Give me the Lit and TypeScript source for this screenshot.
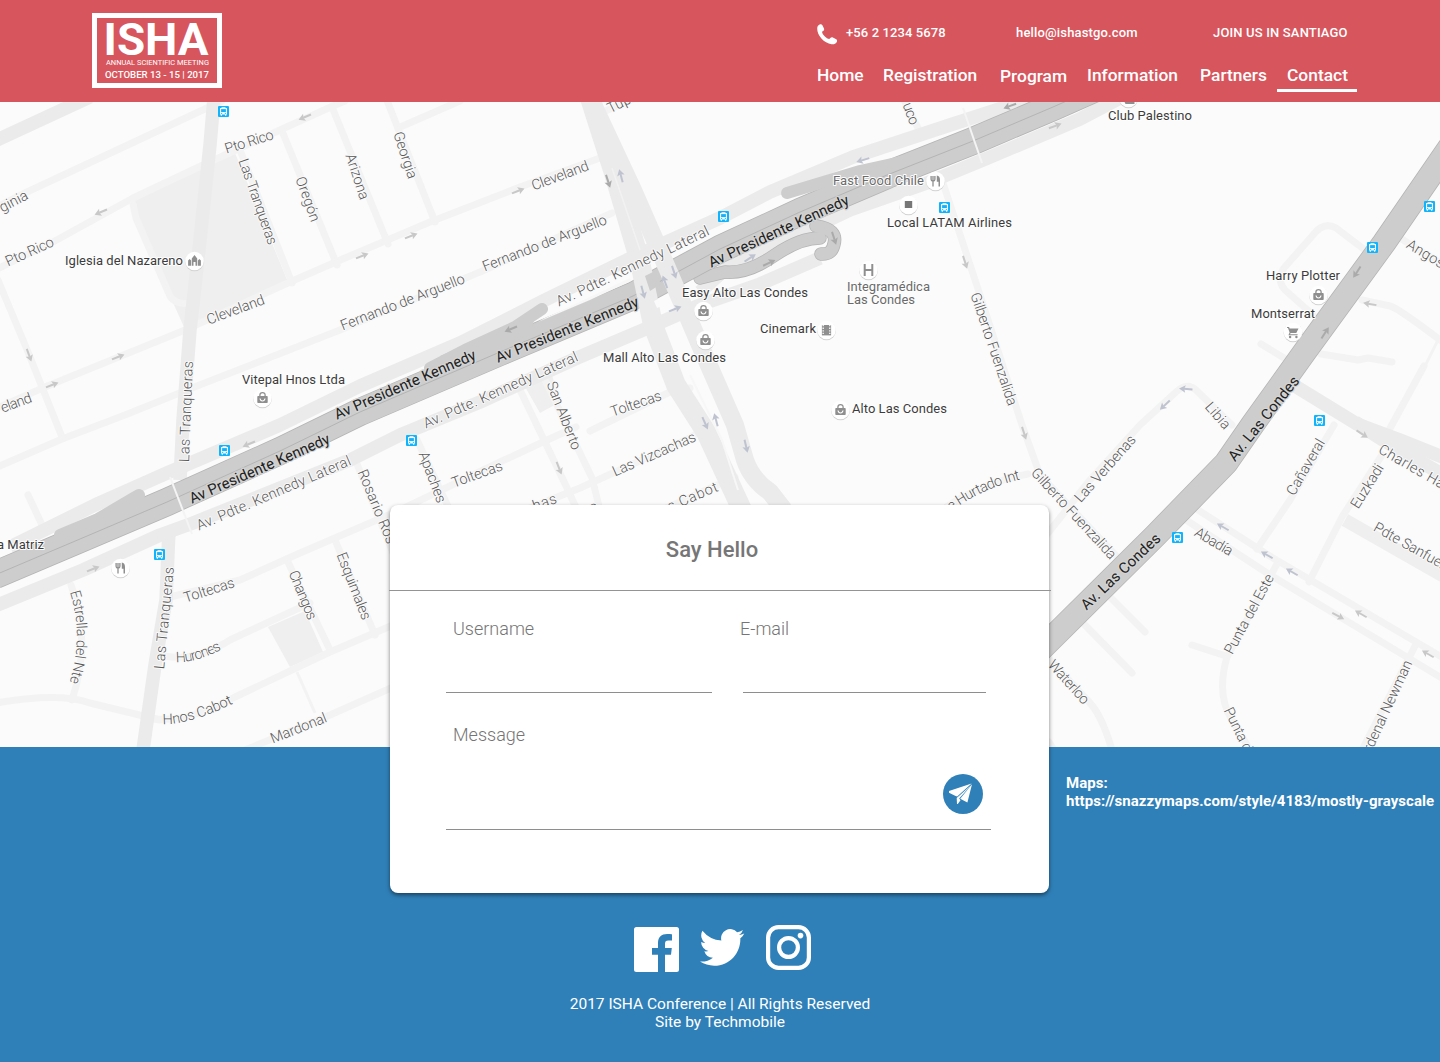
import { LitElement, html, svg, css } from "lit";
import { customElement } from "lit/decorators.js";

type Label = [text: string, x1: number, y1: number, x2: number, y2: number];
type Curved = [text: string, path: string, length: number];
type Mark = [x: number, y: number];
type Arrow = [x: number, y: number, angle: number, tint?: string];

const MINOR_ROADS: string[] = [
  "M-5 208L27 192L207 108L222 101",
  "M-5 270L53 242L133 198L203 165L280 130L333 106L345 101",
  "M-2 280L28 352L62 437",
  "M-5 409L45 387L185 330L290 282L345 258L430 222L520 187L600 158",
  "M-5 468L62 439L125 415L197 386L340 330L480 272L612 213",
  "M240 150L292 283", "M282 131L337 265", "M332 107L388 244", "M386 98L435 222", "M398 128L460 101",
  "M133 204L136 218L170 296Q174 304 190 304",
  "M28 495L43 527", "M71 585Q92 640 72 700", "M-4 703Q60 692 90 703L160 720",
  "M170 597L240 580L300 553L400 510L500 462L545 441L576 427",
  "M165 656Q195 662 230 640L310 603", "M155 719Q190 722 235 697L330 652L400 622",
  "M245 750L330 715L400 684", "M287 560L330 650", "M335 540L375 635", "M357 464L402 575",
  "M417 440L452 515", "M520 390L568 490L577 510", "M545 380L592 478L600 510",
  "M490 524L580 488L690 438L705 428", "M590 431L672 391L690 388", "M640 520L735 477",
  "M603 112L640 96", "M903 98L920 132", "M943 183L980 295L1022 425L1040 475L1122 562",
  "M930 520Q970 485 1028 474", "M1048 533L1090 480L1140 425L1176 392Q1187 382 1196 390L1232 425",
  "M1312 314L1285 290Q1276 280 1284 268L1313 235Q1324 221 1336 228L1365 250",
  "M1400 238L1445 266", "M1362 300L1390 306Q1398 308 1440 340L1448 345",
  "M1424 366L1388 432", "M1261 344L1284 358", "M1321 354L1358 360L1368 358L1392 362",
  "M1334 425L1290 500L1257 549", "M1382 455L1342 517L1309 582",
  "M1180 516L1267 573L1445 680", "M1195 508L1273 558L1445 659",
  "M1278 562L1227 657Q1216 695 1232 720L1250 750", "M1192 645L1226 656",
  "M1110 597L1145 632", "M1083 623L1132 673", "M1048 658L1090 703Q1102 716 1112 750",
  "M1415 646L1362 750", "M1049 742L1054 750",
];

const THIN_ROADS: string[] = ["M297 672L315 713", "M1438 340L1424 368", "M520 388L544 440"];

const MEDIUM_ROADS: string[] = [
  "M-5 141L90 97",
  "M214 98L210 145L200 240L190 330L183 420L180 480",
  "M169 530L166 600L155 665L143 750",
  "M10 547L95 505L167 473L280 425L360 386L460 343L545 300L627 260L720 218L770 192L853 157L953 124L1030 99",
  "M-5 606L83 570L160 535L193 523L350 460L400 435L480 402L577 358L643 330L700 305L760 284L820 258",
  "M740 262L850 210L927 183L983 160L1080 119L1120 98",
  "M1295 386L1357 424L1400 440L1445 458",
  "M1355 422L1383 440L1445 476",
  "M700 292L730 265L790 225L850 205",
];

const ARTERIAL_A = "M590 98L613 170L640 262L653 325L676 385L706 432L743 512";
const ARTERIAL_B = "M590 98L633 190L668 270L700 345L735 425L745 460Q752 480 770 492L784 510";

const KENNEDY = "M-5 575L80 539L167 502L280 451L360 412L500 352L633 296L720 249L800 212L887 175L973 141L1053 107L1130 73";
const CONDES = "M1450 147L1384 243L1306 350L1253 424L1226 463L1155 536L1040 650";
const RAMPS: string[] = [
  "M139 495L132 499L98 519L60 535",
  "M542 309L515 327L465 350L430 368",
  "M787 193L860 171L910 160",
];
const LOOP: string[] = [
  "M816 226Q838 229 834 244Q832 255 821 254",
  "M820 238Q800 238 775 255Q748 274 725 272L700 278",
];

const STREETS: Label[] = [
  ["Pto Rico", 225, 149, 273, 134], ["Las Tranqueras", 243, 159, 273, 244], ["Oregón", 300, 177, 316, 221],
  ["Arizona", 350, 154, 365, 199], ["Georgia", 398, 132, 413, 178], ["Cleveland", 532, 186, 588, 165],
  ["Fernando de Arguello", 483, 267, 606, 219], ["Fernando de Arguello", 341, 326, 464, 278],
  ["Cleveland", 207, 320, 264, 299], ["Pto Rico", 6, 262, 53, 241], ["ginia", 0, 208, 27, 194],
  ["eland", 1, 408, 31, 397], ["Las Tranqueras", 184, 462, 188, 361], ["Las Tranqueras", 159, 669, 169, 567],
  ["Av. Pdte. Kennedy Lateral", 557, 302, 708, 230], ["Av. Pdte. Kennedy Lateral", 424, 424, 577, 356],
  ["Av. Pdte. Kennedy Lateral", 197, 526, 350, 460], ["San Alberto", 551, 382, 577, 449],
  ["Toltecas", 611, 412, 661, 395], ["Las Vizcachas", 613, 472, 695, 436], ["Toltecas", 452, 483, 502, 465],
  ["Apaches", 423, 452, 442, 502], ["Rosario Ros", 362, 470, 392, 543], ["has", 533, 506, 556, 498],
  ["s Cabot", 668, 507, 717, 486], ["s", 590, 508, 598, 505], ["Toltecas", 184, 598, 234, 582],
  ["Changos", 293, 571, 313, 619], ["Esquimales", 341, 553, 367, 619], ["Mardonal", 271, 739, 326, 717],
  ["Tup", 608, 109, 630, 98], ["uco", 907, 103, 915, 124], ["Gilberto Fuenzalida", 975, 293, 1013, 405],
  ["Gilberto Fuenzalida", 1034, 470, 1114, 557], ["Las Verbenas", 1077, 500, 1133, 437],
  ["Libia", 1208, 404, 1228, 427], ["Cañaveral", 1290, 494, 1321, 440], ["Euzkadi", 1354, 507, 1380, 465],
  ["Charles Ha", 1380, 448, 1444, 485], ["Pdte Sanfuen", 1375, 526, 1448, 567], ["Abadía", 1196, 531, 1232, 552],
  ["Punta del Este", 1228, 653, 1270, 575], ["Punta de", 1228, 708, 1252, 757],
  ["ardenal Newman", 1364, 757, 1408, 661], ["Waterloo", 1051, 662, 1087, 702], ["Angost", 1408, 243, 1448, 267],
];

const CURVED: Curved[] = [
  ["Estrella del Nte", "M70 592Q85 640 67 690", 92],
  ["Hurones", "M176 662Q198 663 226 647", 48],
  ["Hnos Cabot", "M163 724Q190 725 236 702", 74],
  ["re Hurtado Int", "M948 514Q980 488 1026 478", 81],
];

const AVENUES: Label[] = [
  ["Av Presidente Kennedy", 190, 499, 329, 438], ["Av Presidente Kennedy", 335, 415, 475, 354],
  ["Av Presidente Kennedy", 496, 358, 638, 301], ["Av Presidente Kennedy", 709, 263, 848, 199],
  ["Av. Las Condes", 1083, 607, 1158, 536], ["Av. Las Condes", 1231, 459, 1296, 378],
];

const PLACES: [text: string, x: number, y: number, width: number, soft?: boolean][] = [
  ["Iglesia del Nazareno", 65, 261, 118], ["Easy Alto Las Condes", 682, 293, 126],
  ["Mall Alto Las Condes", 603, 358, 123], ["Vitepal Hnos Ltda", 242, 380, 103],
  ["Cinemark", 760, 329, 56], ["Alto Las Condes", 852, 409, 95], ["Fast Food Chile", 833, 181, 91, true],
  ["Local LATAM Airlines", 887, 223, 125], ["Integramédica", 847, 287, 83, true],
  ["Las Condes", 847, 300, 68, true], ["Club Palestino", 1108, 116, 84], ["Harry Plotter", 1266, 276, 74],
  ["Montserrat", 1251, 314, 64], ["a Matriz", -3, 545, 47],
];

const BUSES: Mark[] = [
  [223.5, 111.5], [224.5, 450.5], [159.5, 554.5], [411.5, 440.5], [723.5, 216.5],
  [944.5, 207.5], [1429.5, 206.5], [1372.5, 247.5], [1319.5, 420.5], [1177.5, 537.5],
];
const BAGS: Mark[] = [[262.5, 398], [703.5, 311], [705.5, 340], [840.5, 410], [1318.5, 295]];
const FORKS: Mark[] = [[935.5, 181], [120.5, 568]];

const GRAY = "#c8c8c8";
const BLUISH = "#bfc3d0";
const DARK = "#aaa";
const ARROWS: Arrow[] = [
  [305, 117, 157], [101, 212, 157], [29, 355, 70], [118, 357, -22], [52, 385, -22], [362, 256, -22],
  [411, 236, -22], [518, 191, -22], [608, 181, 72, DARK], [621, 176, -105, BLUISH], [643, 292, 75, BLUISH],
  [665, 282, -110, BLUISH], [674, 272, 72, BLUISH], [675, 309, -22, BLUISH], [511, 329, 157, DARK],
  [863, 160, 163, BLUISH], [1010, 106, 160, DARK], [1055, 126, -20], [834, 238, 72, DARK], [769, 263, -25, DARK],
  [750, 258, -33, BLUISH], [965, 262, 72], [1024, 433, 72], [249, 444, 157], [93, 569, -22], [559, 468, 68],
  [705, 423, 66, BLUISH], [716, 420, -105, BLUISH], [746, 446, 77, BLUISH], [1186, 389, -175, BLUISH],
  [1165, 405, 137, BLUISH], [1357, 272, 123, DARK], [1325, 333, -57, DARK], [1370, 304, -170],
  [1362, 434, 33], [1223, 527, -150, BLUISH], [1267, 555, -150, BLUISH], [1292, 572, -150, BLUISH],
  [1361, 614, -150], [1338, 616, 28], [1428, 654, -150],
];

const labelAlong = ([text, x1, y1, x2, y2]: Label, kind: string) => {
  const angle = (Math.atan2(y2 - y1, x2 - x1) * 180) / Math.PI;
  const length = Math.hypot(x2 - x1, y2 - y1);
  return svg`<text class=${kind} dy="0.34em" textLength=${length.toFixed(1)}
    transform="translate(${x1} ${y1}) rotate(${angle.toFixed(2)})">${text}</text>`;
};

@customElement("city-map")
export class CityMap extends LitElement {
  static styles = css`
    :host { display: block; height: 645px; overflow: hidden; background: #fbfbfb; }
    svg { display: block; width: 1440px; height: 645px; }
    path { fill: none; }
    text { font-family: Roboto, "Liberation Sans", sans-serif; paint-order: stroke; stroke-linejoin: round; }
    .minor { stroke: #f3f3f3; stroke-width: 7; stroke-linejoin: round; stroke-linecap: round; }
    .thin { stroke: #f3f3f3; stroke-width: 3; }
    .medium { stroke: #ebebeb; stroke-width: 13.5; stroke-linejoin: round; }
    .park { fill: #efefef; }
    .edge { stroke: #b4b4b4; }
    .fill { stroke: #cdcdcd; }
    .round { stroke-linecap: round; }
    .seam { stroke: #b4b4b4; stroke-width: 1; }
    .bridge { stroke: #f4f4f4; stroke-width: 2; }
    .street { font-size: 14.5px; font-weight: 300; fill: #585858; stroke: #fafafa; stroke-width: 2px; }
    .avenue { font-size: 15px; font-weight: 400; fill: #222; stroke: #d4d4d4; stroke-width: 2.5px; }
    .place { font-size: 13px; font-weight: 400; fill: #3c3c3c; stroke: #fdfdfd; stroke-width: 2px; }
    .soft { fill: #6a6a6a; }
    .shade { fill: #d2d2d2; }
    .disc { fill: #fff; }
    .glyph { fill: #8f8f8f; }
    .line { fill: none; stroke: #8f8f8f; stroke-width: 1.3; }
    .bus { fill: #10b4fc; }
    .white { fill: #fff; }
    .bridge-gap { fill: #fbfbfb; }
    .deck { fill: #cdcdcd; }
    .median { fill: #f7f7f7; }
    .solid { fill: #8f8f8f; }
  `;

  private disc([x, y]: Mark, glyph: unknown) {
    return svg`<g transform="translate(${x} ${y})">
      <circle class="shade" cy="0.8" r="9.4"></circle><circle class="disc" r="9.3"></circle>${glyph}</g>`;
  }

  render() {
    const bag = svg`<rect class="glyph" x="-5.2" y="-2" width="10.4" height="7" rx="0.8"></rect>
      <path class="line" d="M-2.6 -1.5V-3Q-2.6 -5.3 0 -5.3T2.6 -3V-1.5"></path>
      <path d="M-2.5 0.5Q-2 3 0 3T2.5 0.5" stroke="#fff" stroke-width="1.2"></path>`;
    const fork = svg`<path class="line" d="M-4.4 -5V-2Q-4.4 0 -2.5 0T-0.6 -2V-5M-2.5 -5V5.5"></path>
      <path class="solid" d="M1.3 -5.4Q4.5 -5 4.5 -1V5.5H3V0.8H1.3Z"></path>`;
    return html`<svg viewBox="0 102 1440 645" role="img" aria-label="Las Condes, Santiago">
      <polygon class="park" points="133,201 235,153 288,282 184,327 170,296 133,216"></polygon>
      <polygon class="park" points="268,627 305,611 323,652 290,667"></polygon>
      <polygon class="park" points="524,385 552,375 560,402 540,413"></polygon>
      ${MINOR_ROADS.map((d) => svg`<path class="minor" d=${d}></path>`)}
      ${THIN_ROADS.map((d) => svg`<path class="thin" d=${d}></path>`)}
      <path d="M1345 520L1445 577" stroke="#efefef" stroke-width="13"></path>
      ${MEDIUM_ROADS.map((d) => svg`<path class="medium" d=${d}></path>`)}
      <g stroke-linejoin="round">
        ${LOOP.map((d) => svg`<path class="edge round" stroke-width="13.5" d=${d}></path>`)}
        ${LOOP.map((d) => svg`<path class="fill round" stroke-width="12" d=${d}></path>`)}
        <path class="edge" stroke-width="28" d=${KENNEDY}></path>
        ${RAMPS.map((d) => svg`<path class="fill round" stroke-width="12" d=${d}></path>`)}
        <path class="fill" stroke-width="26.4" d=${KENNEDY}></path>
        <path class="deck" d="M60 530L98 513L130 500L120 515L60 540Z"></path>
        <path class="deck" d="M440 356L500 330L536 313L530 335L440 372Z"></path>
        <path class="seam" d=${KENNEDY}></path>
        <path class="edge" stroke-width="24.5" d=${CONDES}></path>
        <path class="fill" stroke-width="23" d=${CONDES}></path>
      </g>
      <path class="median" d="M545 318L575 304L630 278L631 281L590 300L538 322Z"></path>
      <path d=${ARTERIAL_A} stroke="#ebebeb" stroke-width="20" stroke-linejoin="round"></path>
      <path d=${ARTERIAL_B} stroke="#ebebeb" stroke-width="18" stroke-linejoin="round"></path>
      <path d="M690 375L722 440L738 490" stroke="#f7f7f7" stroke-width="2"></path>
      <path d="M612 168L640 250" stroke="#f2f2f2" stroke-width="1.5"></path>
      <path class="deck" d="M645 276L655 271L661 284L650 291Z"></path>
      <path class="bridge-gap" d="M654 301L664 296L668 304L657 308Z"></path>
      <path class="bridge" d="M170 477L192 534"></path>
      <path class="bridge" d="M963 108L982 163"></path>
      ${ARROWS.map(
        ([x, y, angle, tint]) => svg`<g transform="translate(${x} ${y}) rotate(${angle})">
          <path d="M-6.5 0H2" stroke=${tint ?? GRAY} stroke-width="2"></path>
          <polygon points="0.5,-3.8 7,0 0.5,3.8 1.8,0" fill=${tint ?? GRAY}></polygon></g>`
      )}
      ${STREETS.map((label) => labelAlong(label, "street"))}
      ${CURVED.map(
        ([text, d, length], i) => svg`<path id="curve-${i}" d=${d}></path>
          <text class="street"><textPath href="#curve-${i}" textLength=${length}>${text}</textPath></text>`
      )}
      ${AVENUES.map((label) => labelAlong(label, "avenue"))}
      ${this.disc([194.5, 261], svg`<path class="solid" d="M-6.4 4.8V-0.4L-4.9 -2L-3.4 -0.4V4.8ZM3.4 4.8V-0.4L4.9 -2L6.4 -0.4V4.8ZM-2.7 4.8V-2.4L0 -6L2.7 -2.4V4.8H1V1H-1V4.8Z"></path>`)}
      ${BAGS.map((at) => this.disc(at, bag))}
      ${FORKS.map((at) => this.disc(at, fork))}
      ${this.disc([908.5, 205], svg`<rect x="-3.7" y="-4" width="7.4" height="7" fill="#777"></rect>`)}
      ${this.disc([868.5, 270], svg`<path d="M-3.8 -6V6M3.8 -6V6M-3.8 0H3.8" stroke="#8f8f8f" stroke-width="2"></path>`)}
      ${this.disc([826.5, 330], svg`<rect class="glyph" x="-4.6" y="-5" width="9.2" height="10.4"></rect>
        <path d="M-3.3 -5V5.4M3.3 -5V5.4" stroke="#fff" stroke-width="1.3" stroke-dasharray="1.3 1.3"></path>`)}
      ${this.disc([1293, 332], svg`<path class="solid" d="M-6 -5H-4L-3.3 -3.6H5.5L3.3 1H-2.4L-3 2.2H4.6V3.3H-4.6L-3.4 0.6L-5 -4H-6Z"></path>
        <circle class="glyph" cx="-2.9" cy="5" r="1.2"></circle><circle class="glyph" cx="3.4" cy="5" r="1.2"></circle>`)}
      ${this.disc([1128.5, 98], svg`<path class="solid" d="M-5 2L2 4V6H-3Z"></path><rect class="glyph" x="0" y="2" width="6" height="4"></rect>`)}
      ${BUSES.map(
        ([x, y]) => svg`<g transform="translate(${x} ${y})"><rect class="bus" x="-5.5" y="-5.5" width="11" height="11" rx="1"></rect>
          <polygon class="white" points="-3.5,3 -3.5,-3.4 -2,-3.4 -2,-4.2 2,-4.2 2,-3.4 3.5,-3.4 3.5,3 2.8,3 2.8,4.2 1.6,4.2 1.6,3 -1.6,3 -1.6,4.2 -2.8,4.2 -2.8,3"></polygon>
          <rect class="bus" x="-2.4" y="-2.4" width="4.8" height="3"></rect>
          <rect class="bus" x="-2.4" y="1.4" width="1.1" height="1"></rect><rect class="bus" x="1.3" y="1.4" width="1.1" height="1"></rect></g>`
      )}
      ${PLACES.map(
        ([text, x, y, width, soft]) =>
          svg`<text class="place ${soft ? "soft" : ""}" x=${x} y=${y - 0.6} dy="0.35em" textLength=${width}>${text}</text>`
      )}
    </svg>`;
  }
}

@customElement("site-header")
export class SiteHeader extends LitElement {
  static styles = css`
    :host { display: flex; box-sizing: border-box; height: 102px; padding: 13px 83px 0 92px;
      justify-content: space-between; background: #d7555d; color: #fff; }
    .logo { box-sizing: border-box; width: 130px; height: 75px; border: 5px solid #fff; }
    .logo svg { display: block; overflow: visible; }
    .logo text { fill: #fff; font-family: Roboto, sans-serif; }
    .name { font-size: 45px; font-weight: 700; }
    .tag { font-size: 7px; }
    .date { font-size: 9.5px; font-weight: 500; }
    .side { width: 540px; padding-top: 9px; }
    .contacts { display: flex; align-items: center; height: 21px; font-size: 13px; font-weight: 500; line-height: 20px; }
    .contacts span { white-space: nowrap; }
    .phone { display: flex; align-items: center; gap: 8px; width: 199px; letter-spacing: 0.1px; }
    .phone svg { margin-top: 4px; flex: none; }
    .mail { width: 197px; letter-spacing: 0.16px; }
    .join { letter-spacing: 0.16px; }
    nav { display: flex; margin-top: 17px; height: 33px; font-size: 17.4px; font-weight: 500; line-height: 30px; }
    nav a { color: #fff; text-decoration: none; white-space: nowrap; }
    .home { width: 66px; } .registration { width: 117px; }
    .program { width: 87px; padding-top: 1px; } .information { width: 113px; } .partners { width: 77px; }
    .contact { box-sizing: border-box; width: 80px; padding-left: 10px; height: 32px; border-bottom: 3px solid #fff; }
  `;
  render() {
    return html`
      <div class="logo"><svg width="120" height="65" viewBox="97 18 120 65">
        <text class="name" x="103.5" y="55" textLength="105" lengthAdjust="spacingAndGlyphs">ISHA</text>
        <text class="tag" x="106" y="65" textLength="103" lengthAdjust="spacingAndGlyphs">ANNUAL SCIENTIFIC MEETING</text>
        <text class="date" x="105" y="78.3" textLength="104" lengthAdjust="spacingAndGlyphs">OCTOBER 13 - 15 | 2017</text>
      </svg></div>
      <div class="side">
        <div class="contacts">
          <span class="phone"><svg width="21" height="21" viewBox="0 0 21 21"><path fill="#fff" d="M2.6 0.6C3.6 0 4.8 0.2 5.4 1.2L7 4.4C7.4 5.4 7 6.3 6.2 6.9L5 7.8C5.2 9.2 6 10.8 7.6 12.3C9.2 13.9 10.8 14.8 12.3 15.1L13.3 13.9C14 13.1 15 12.9 15.9 13.4L19.2 15.3C20.2 15.9 20.3 17 19.8 18C18.8 19.8 16.8 20.6 14.6 20.3C10.8 19.7 7.2 17.8 4.4 14.6C1.6 11.4 0.3 8 0.2 4.8C0.2 2.8 1 1.3 2.6 0.6Z"></path></svg>+56 2 1234 5678</span>
          <span class="mail">hello@ishastgo.com</span>
          <span class="join">JOIN US IN SANTIAGO</span>
        </div>
        <nav>
          <a class="home">Home</a><a class="registration">Registration</a><a class="program">Program</a>
          <a class="information">Information</a><a class="partners">Partners</a><a class="contact">Contact</a>
        </nav>
      </div>`;
  }
}

@customElement("hello-form")
export class HelloForm extends LitElement {
  static styles = css`
    :host { display: block; box-sizing: border-box; height: 388px; border-radius: 8px; background: #fff;
      box-shadow: 0 2px 4px rgba(0, 0, 0, 0.5); font-family: Roboto, "Liberation Sans", sans-serif; }
    h2 { box-sizing: border-box; margin: 0 -2px 0 -1px; height: 86px; padding: 30px 16px 0 0; border-bottom: 1px solid #949494;
      font-size: 22px; font-weight: 500; line-height: 30px; text-align: center; color: #767676; }
    .row { display: flex; gap: 31px; padding-left: 56px; }
    .field { box-sizing: border-box; border-bottom: 1px solid #8e8e8e; font-size: 18px; font-weight: 300;
      line-height: 24px; color: #757575; }
    .user { width: 266px; height: 102px; padding: 26px 0 0 7px; }
    .mail { width: 243px; height: 102px; padding-top: 26px; text-indent: -3px; }
    .message { display: flex; justify-content: space-between; align-items: flex-start; margin-left: 56px; width: 545px;
      height: 137px; padding: 30px 8px 0 7px; }
    button { width: 40px; height: 40px; margin-top: 51px; padding: 0; border: 0; border-radius: 50%; background: #2f80b8; }
    button svg { display: block; }
  `;
  render() {
    return html`<h2>Say Hello</h2>
      <div class="row"><div class="field user">Username</div><div class="field mail">E-mail</div></div>
      <div class="field message">Message
        <button aria-label="Send"><svg width="40" height="40" viewBox="0 0 40 40">
          <path fill="#fff" d="M6 17L28.6 9.6L14.2 22.6L12.6 22L6 18.8ZM29 10.2L24.4 28.6L17.2 24.7ZM28 11.2L16.2 24.4L17.5 26.2L14.8 30L14 30L13.7 24Z"></path></svg></button>
      </div>`;
  }
}

@customElement("app-root")
export class AppRoot extends LitElement {
  static styles = css`
    :host { display: block; width: 1440px; height: 1062px; overflow: hidden; font-family: Roboto, "Liberation Sans", sans-serif; }
    footer { height: 315px; background: #2f80b8; color: #fff; }
    .top { display: grid; grid-template-columns: 659px 1fr; column-gap: 17px; height: 146px; padding-left: 390px; }
    hello-form { position: relative; margin-top: -242px; }
    .credit { margin: 27px 0 0; font-size: 15px; font-weight: 700; letter-spacing: 0.04px; line-height: 18px; white-space: nowrap; }
    .social { display: flex; justify-content: center; gap: 21px; padding: 32px 0 0 5px; height: 47px; }
    .facebook { margin-top: 2px; } .twitter { margin-top: 4px; }
    .legal { margin: 23px 0 0; text-align: center; font-size: 15.5px; line-height: 18px; font-weight: 400; }
    .legal p { margin: 0; }
  `;
  render() {
    return html`<site-header></site-header><city-map></city-map>
      <footer>
        <div class="top"><hello-form></hello-form>
          <p class="credit">Maps:<br />https://snazzymaps.com/style/4183/mostly-grayscale</p></div>
        <div class="social">
          <svg class="facebook" width="45" height="45" viewBox="0 0 45 45"><path fill="#fff" d="M2.5 0H42.5Q45 0 45 2.5V42.5Q45 45 42.5 45H31V27.8H37L37.8 21H31V16.8C31 14.6 31.8 13.4 34.4 13.4H38V7.2C37.2 7.1 35.4 6.9 33 6.9C27.6 6.9 24 10 24 15.9V21H18V27.8H24V45H2.5Q0 45 0 42.5V2.5Q0 0 2.5 0Z"></path></svg>
          <svg class="twitter" width="45" height="37" viewBox="0 0 24 19.6"><path fill="#fff" d="M23.6 2.3a9.6 9.6 0 0 1-2.8.8 4.9 4.9 0 0 0 2.1-2.7c-1 .6-2 1-3.1 1.2a4.9 4.9 0 0 0-8.4 4.5A13.9 13.9 0 0 1 1.3.9a4.9 4.9 0 0 0 1.5 6.5 4.9 4.9 0 0 1-2.2-.6v.1a4.9 4.9 0 0 0 3.9 4.8 4.9 4.9 0 0 1-2.2.1 4.9 4.9 0 0 0 4.6 3.4A9.9 9.9 0 0 1 0 17.3a13.9 13.9 0 0 0 7.5 2.2c9.1 0 14.3-7.7 14-14.6.9-.7 1.6-1.6 2.1-2.6Z"></path></svg>
          <svg width="45" height="45" viewBox="0 0 45 45" fill="none" stroke="#fff"><rect x="2.1" y="2.1" width="40.8" height="40.8" rx="10.5" stroke-width="4.2"></rect><circle cx="22.5" cy="22.5" r="9.4" stroke-width="4.2"></circle><circle cx="34.5" cy="10.6" r="2.8" fill="#fff" stroke="none"></circle></svg>
        </div>
        <div class="legal"><p>2017 ISHA Conference | All Rights Reserved</p><p>Site by Techmobile</p></div>
      </footer>`;
  }
}
